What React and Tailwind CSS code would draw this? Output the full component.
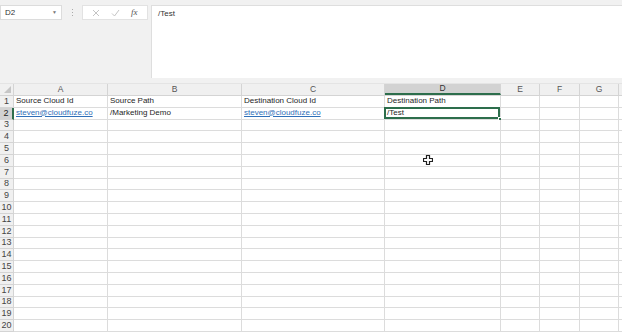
import React from "react";

const cols = [
  { id: "A", w: "w-[94px]" },
  { id: "B", w: "w-[134px]" },
  { id: "C", w: "w-[143px]" },
  { id: "D", w: "w-[116px]" },
  { id: "E", w: "w-[39px]" },
  { id: "F", w: "w-[40px]" },
  { id: "G", w: "w-[39px]" },
  { id: "", w: "w-[20px]" },
];

const data = {
  1: { A: "Source Cloud Id", B: "Source Path", C: "Destination Cloud Id", D: "Destination Path" },
  2: { A: "steven@cloudfuze.co", B: "/Marketing Demo", C: "steven@cloudfuze.co", D: "/Test" },
};

const links = ["A2", "C2"];

const Cell = ({ col, row }) => {
  const value = data[row]?.[col.id];
  const key = col.id + row;
  const selected = key === "D2";
  return (
    <div
      className={`${col.w} shrink-0 h-full border-r border-b border-[#dcdcdc] relative pl-[2px] pb-[2px] flex items-end overflow-visible whitespace-nowrap`}
    >
      {value && (
        <span
          className={
            links.includes(key)
              ? "text-[#2f6fb8] underline decoration-[#2f6fb8]"
              : "text-[#1e1e1e]"
          }
        >
          {value}
        </span>
      )}
      {selected && (
        <>
          <div className="absolute -left-[1px] -top-[1px] right-0 bottom-0 border-2 border-[#2d6e4c]" />
          <div className="absolute -right-[2px] -bottom-[2px] w-[4px] h-[4px] bg-[#2d6e4c] border border-white" />
        </>
      )}
    </div>
  );
};

export default function App() {
  const rows = Array.from({ length: 20 }, (_, i) => i + 1);
  return (
    <div className="w-[622px] h-[332px] overflow-hidden bg-white relative font-['Liberation_Sans',Arial,sans-serif] text-[8px] leading-none">
      {/* ribbon / formula bar */}
      <div className="h-[84px] bg-[#f1f1f1] flex items-start pt-[5px] border-b border-[#e4e4e4]">
        <div className="w-[62px] h-[15px] bg-white border border-[#dcdcdc] flex items-center justify-between px-[4px] text-[#333]">
          <span>D2</span>
          <span className="text-[5px] text-[#777]">▼</span>
        </div>
        <div className="w-[20px] h-[15px] flex flex-col items-center justify-center gap-[2px]">
          <span className="w-[1px] h-[1px] bg-[#aaa]" />
          <span className="w-[1px] h-[1px] bg-[#aaa]" />
          <span className="w-[1px] h-[1px] bg-[#aaa]" />
        </div>
        <div className="w-[66px] h-[15px] bg-white border border-[#e2e2e2] flex items-center justify-around px-[4px] text-[#b4b4b4]">
          <svg width="8" height="8" viewBox="0 0 8 8">
            <path d="M1 1 L7 7 M7 1 L1 7" stroke="#bdbdbd" strokeWidth="0.9" />
          </svg>
          <svg width="9" height="8" viewBox="0 0 9 8">
            <path d="M1 4.5 L3.5 7 L8 1" stroke="#bdbdbd" strokeWidth="0.9" fill="none" />
          </svg>
          <span className="italic font-['Liberation_Serif',serif] text-[9px] text-[#555]">fx</span>
        </div>
        <div className="ml-[3px] flex-1 h-[73px] bg-white border-t border-l border-[#dedede] pl-[6px] pt-[4px] text-[#333]">
          /Test
        </div>
      </div>

      {/* column headers */}
      <div className="h-[12px] flex bg-[#f0f0f0] border-b border-[#d4d4d4]">
        <div className="w-[14px] shrink-0 h-full border-r border-[#d4d4d4] relative">
          <div className="absolute right-[2px] bottom-[2px] w-0 h-0 border-l-[7px] border-l-transparent border-b-[7px] border-b-[#c6c6c6]" />
        </div>
        {cols.map((c) => (
          <div
            key={c.id || "x"}
            className={`${c.w} shrink-0 h-full flex items-center justify-center text-[8.5px] border-r border-[#d4d4d4] ${
              c.id === "D"
                ? "bg-[#d2d2d2] text-[#333] border-b-2 border-b-[#2d6e4c]"
                : "text-[#555]"
            }`}
          >
            {c.id}
          </div>
        ))}
      </div>

      {/* rows */}
      {rows.map((r) => (
        <div key={r} className="h-[11.8px] flex">
          <div
            className={`w-[14px] shrink-0 h-full flex items-center justify-center text-[9px] border-b border-[#d4d4d4] ${
              r === 2
                ? "bg-[#d2d2d2] text-[#222] border-r-2 border-r-[#2d6e4c]"
                : "bg-[#f0f0f0] text-[#444] border-r border-r-[#d4d4d4]"
            }`}
          >
            {r}
          </div>
          {cols.map((c) => (
            <Cell key={c.id || "x"} col={c} row={r} />
          ))}
        </div>
      ))}

      {/* mouse cursor */}
      <svg className="absolute left-[423px] top-[155px]" width="10" height="10" viewBox="0 0 10 10">
        <path
          d="M3.5 0.5 H6.5 V3.5 H9.5 V6.5 H6.5 V9.5 H3.5 V6.5 H0.5 V3.5 H3.5 Z"
          fill="#fff"
          stroke="#222"
          strokeWidth="1.2"
        />
      </svg>
    </div>
  );
}
